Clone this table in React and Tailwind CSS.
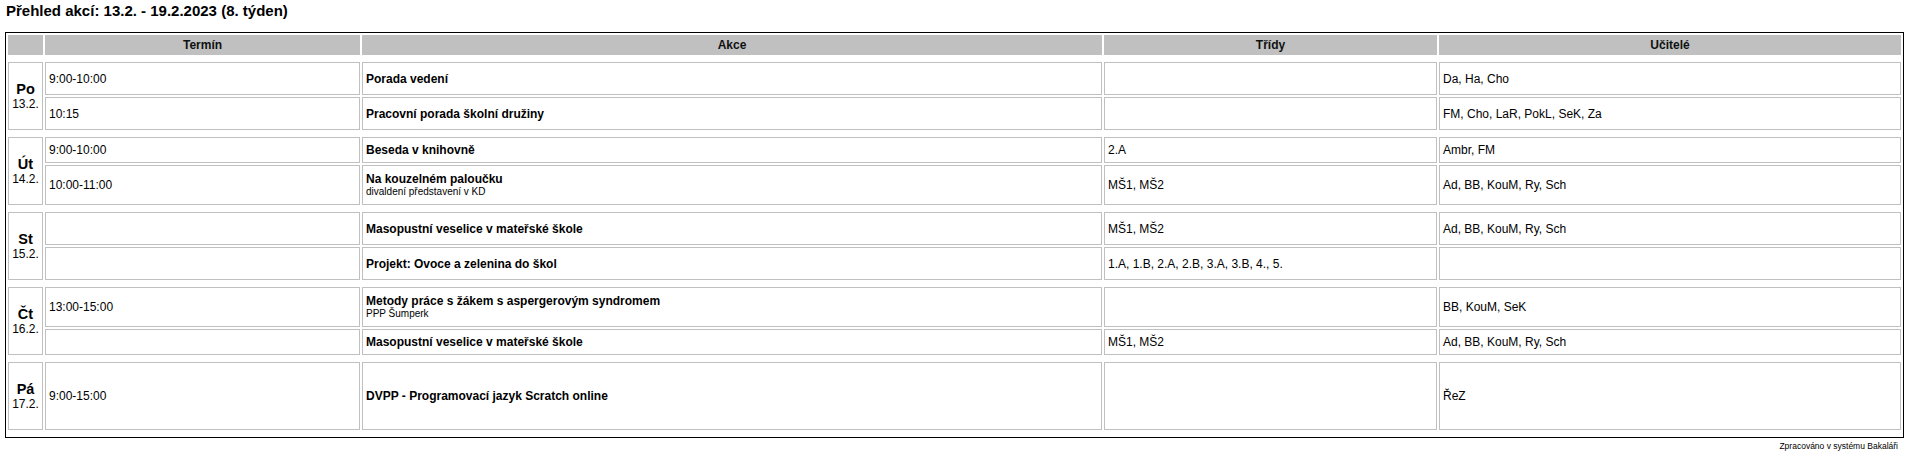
import React from "react";

// týdenní přehled akcí (Bakaláři)
const days = [
  {
    name: "Po",
    date: "13.2.",
    rowsClass: "grid-rows-[33px_33px]",
    span: "row-span-2",
    items: [
      { time: "9:00-10:00", title: "Porada vedení", classes: "", teachers: "Da, Ha, Cho" },
      { time: "10:15", title: "Pracovní porada školní družiny", classes: "", teachers: "FM, Cho, LaR, PokL, SeK, Za" },
    ],
  },
  {
    name: "Út",
    date: "14.2.",
    rowsClass: "grid-rows-[26px_40px]",
    span: "row-span-2",
    items: [
      { time: "9:00-10:00", title: "Beseda v knihovně", classes: "2.A", teachers: "Ambr, FM" },
      {
        time: "10:00-11:00",
        title: "Na kouzelném paloučku",
        note: "divaldení představení v KD",
        classes: "MŠ1, MŠ2",
        teachers: "Ad, BB, KouM, Ry, Sch",
      },
    ],
  },
  {
    name: "St",
    date: "15.2.",
    rowsClass: "grid-rows-[33px_33px]",
    span: "row-span-2",
    items: [
      { time: "", title: "Masopustní veselice v mateřské škole", classes: "MŠ1, MŠ2", teachers: "Ad, BB, KouM, Ry, Sch" },
      { time: "", title: "Projekt: Ovoce a zelenina do škol", classes: "1.A, 1.B, 2.A, 2.B, 3.A, 3.B, 4., 5.", teachers: "" },
    ],
  },
  {
    name: "Čt",
    date: "16.2.",
    rowsClass: "grid-rows-[40px_26px]",
    span: "row-span-2",
    items: [
      {
        time: "13:00-15:00",
        title: "Metody práce s žákem s aspergerovým syndromem",
        note: "PPP Šumperk",
        classes: "",
        teachers: "BB, KouM, SeK",
      },
      { time: "", title: "Masopustní veselice v mateřské škole", classes: "MŠ1, MŠ2", teachers: "Ad, BB, KouM, Ry, Sch" },
    ],
  },
  {
    name: "Pá",
    date: "17.2.",
    rowsClass: "grid-rows-[68px]",
    span: "row-span-1",
    items: [
      { time: "9:00-15:00", title: "DVPP - Programovací jazyk Scratch online", classes: "", teachers: "ŘeZ" },
    ],
  },
];

const cols = "grid grid-cols-[35px_315px_740px_333px_462px] gap-[2px]";
const cell = "border border-[#c0c0c0] bg-white flex items-center px-[3px] text-[12px] leading-[14px] text-black";

export default function App() {
  return (
    <div className="bg-white min-h-screen text-black" style={{ fontFamily: '"Liberation Sans", Arial, sans-serif' }}>
      <div className="pl-[6px] pt-[2px] text-[15px] leading-[17px] font-bold">
        Přehled akcí: 13.2. - 19.2.2023 (8. týden)
      </div>

      <div className="ml-[5px] mt-[13px] w-[1899px] border border-black px-[2px] pt-[2px] pb-[7px] flex flex-col gap-[7px]">
        {/* hlavička */}
        <div className={`${cols} h-[20px]`}>
          {["", "Termín", "Akce", "Třídy", "Učitelé"].map((h, i) => (
            <div key={i} className="bg-[#c0c0c0] flex items-center justify-center text-[12px] font-bold text-[#111]">
              {h}
            </div>
          ))}
        </div>

        {days.map((day) => (
          <div key={day.name} className={`${cols} ${day.rowsClass}`}>
            <div className={`${day.span} border border-[#c0c0c0] flex flex-col items-center justify-center`}>
              <span className="text-[14.5px] leading-[16px] font-bold">{day.name}</span>
              <span className="text-[12px] leading-[14px]">{day.date}</span>
            </div>
            {day.items.map((it, i) => (
              <React.Fragment key={i}>
                <div className={cell}>{it.time}</div>
                <div className={`${cell} flex-col justify-center items-start`}>
                  <span className="font-bold">{it.title}</span>
                  {it.note && <span className="text-[10px] leading-[12px]">{it.note}</span>}
                </div>
                <div className={cell}>{it.classes}</div>
                <div className={cell}>{it.teachers}</div>
              </React.Fragment>
            ))}
          </div>
        ))}
      </div>

      <div className="mt-[3px] pr-[10px] text-right text-[8.5px] leading-[10px]">
        Zpracováno v systému Bakaláři
      </div>
    </div>
  );
}
